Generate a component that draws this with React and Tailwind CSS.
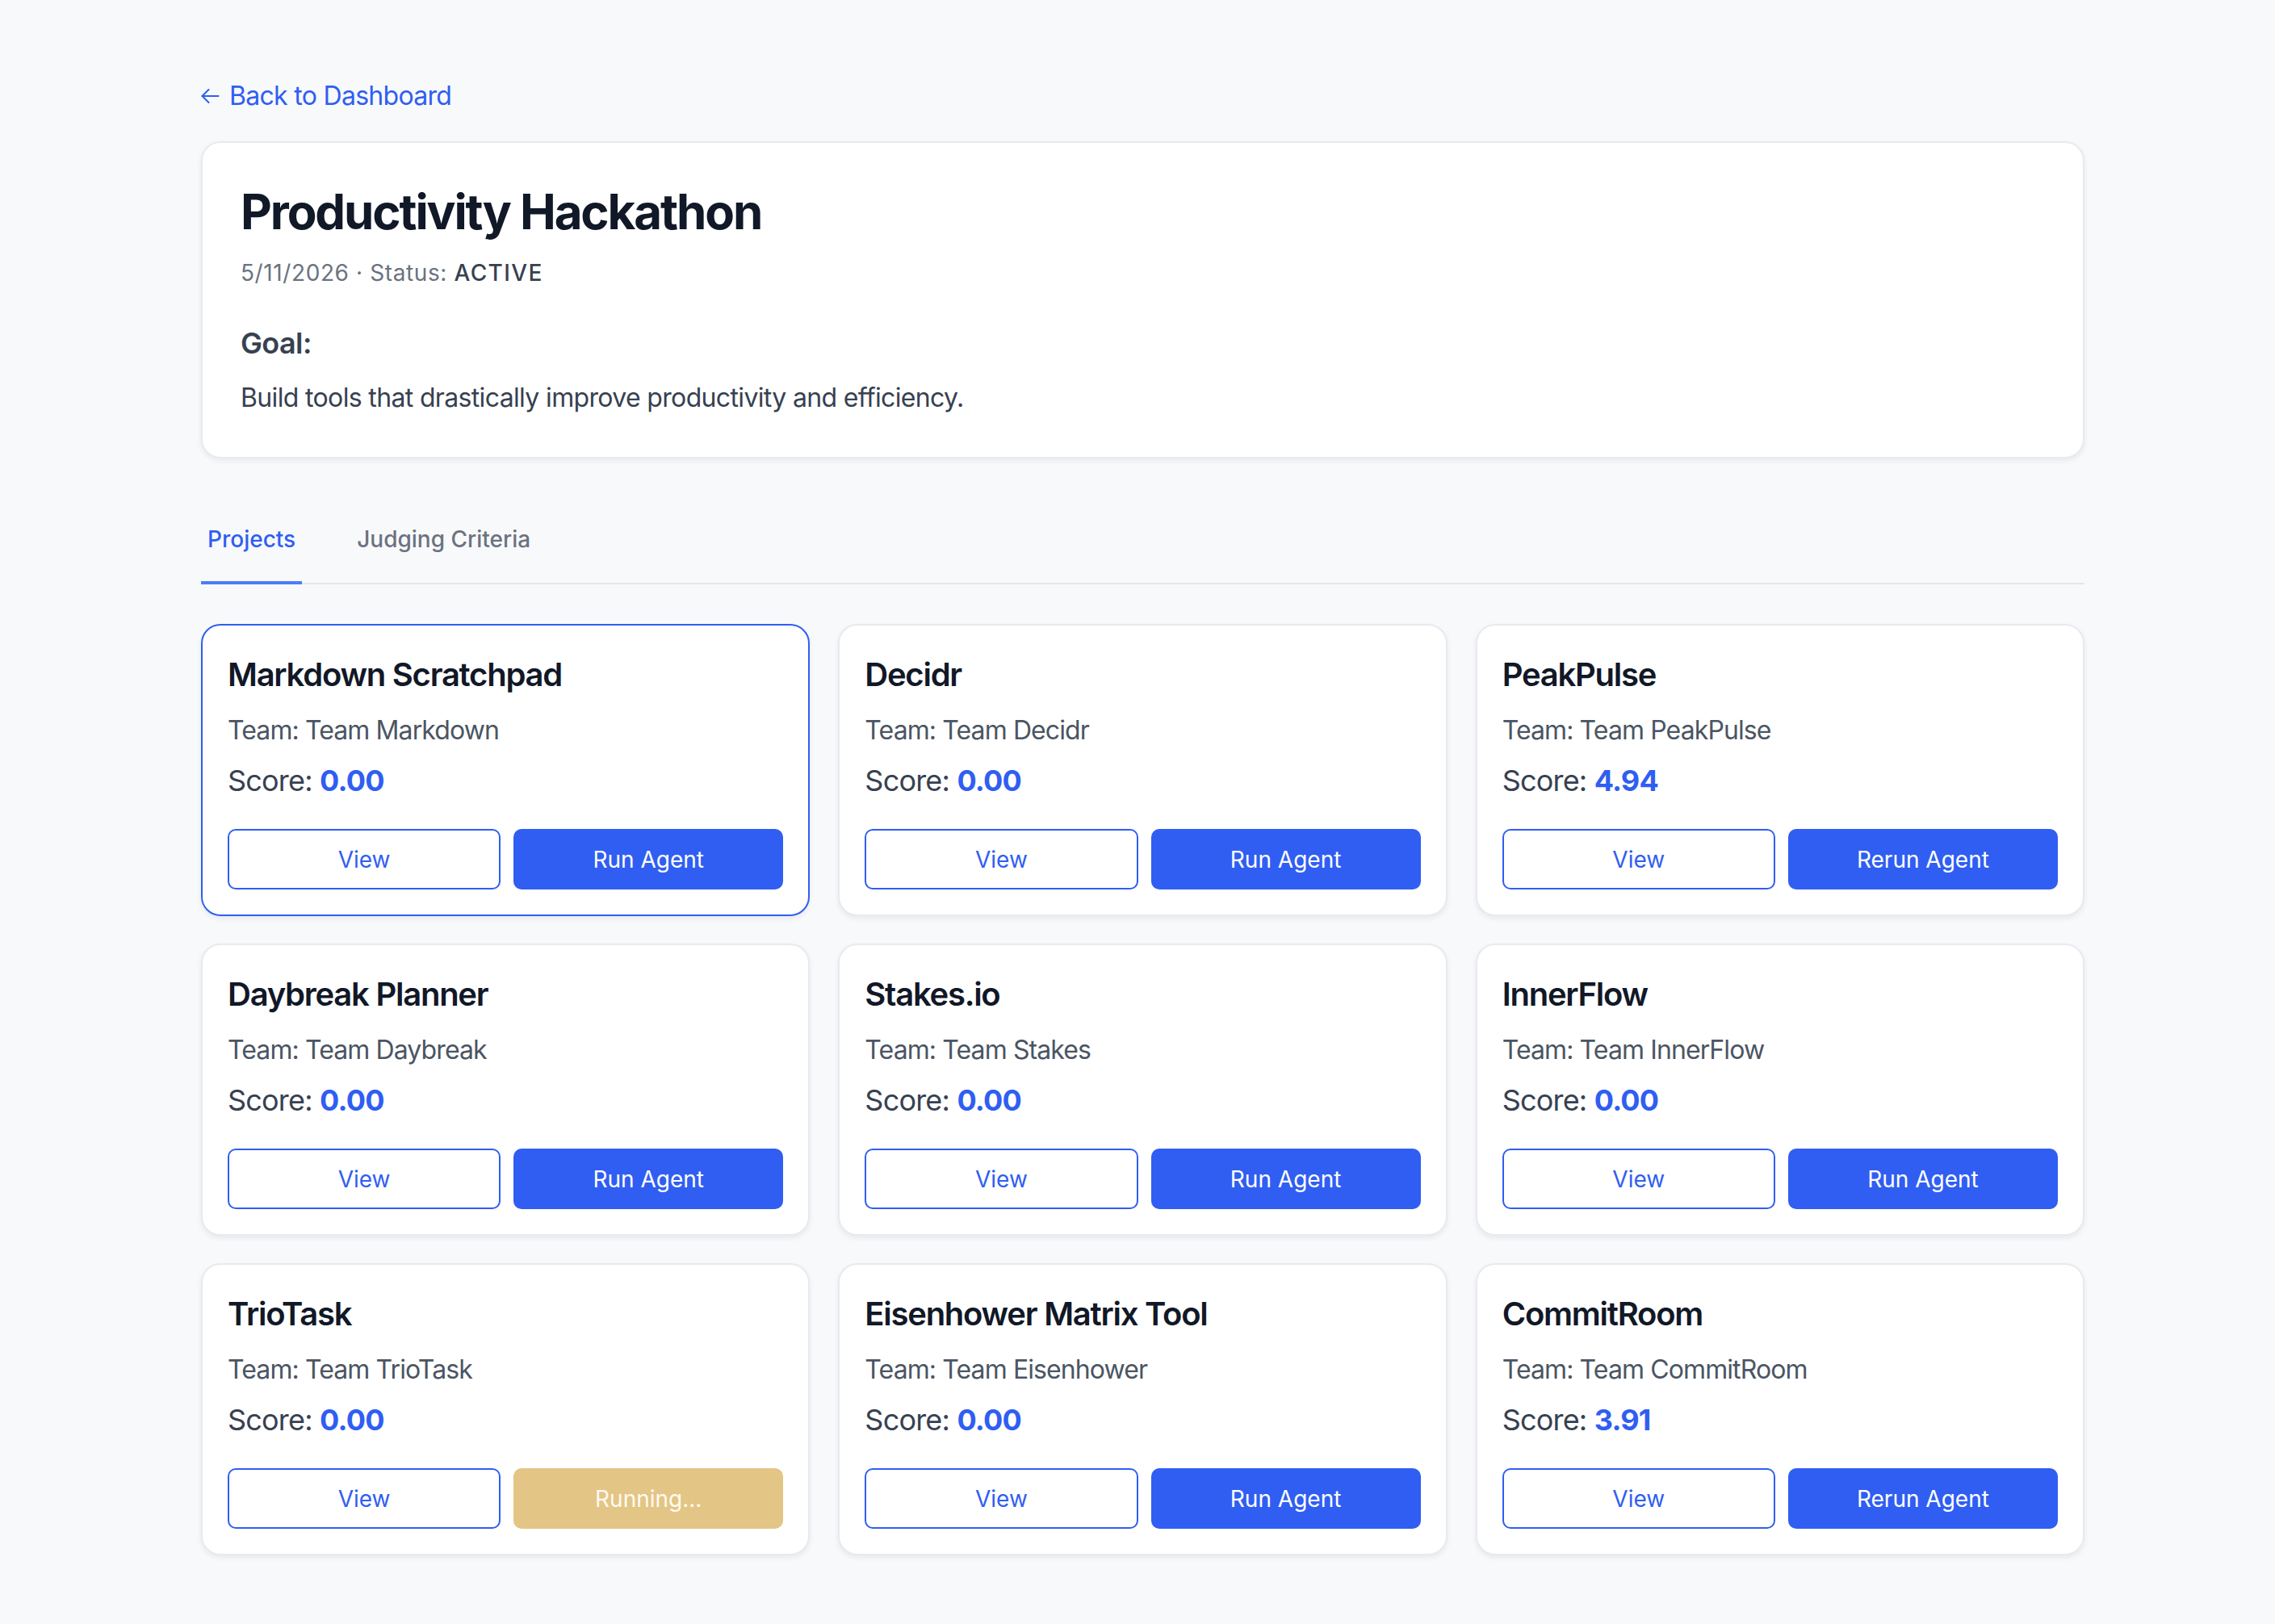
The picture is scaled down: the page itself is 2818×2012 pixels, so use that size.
import React from "react";

const projects = [
  { name: "Markdown Scratchpad", team: "Team Markdown", score: "0.00", action: "run", selected: true },
  { name: "Decidr", team: "Team Decidr", score: "0.00", action: "run" },
  { name: "PeakPulse", team: "Team PeakPulse", score: "4.94", action: "rerun" },
  { name: "Daybreak Planner", team: "Team Daybreak", score: "0.00", action: "run" },
  { name: "Stakes.io", team: "Team Stakes", score: "0.00", action: "run" },
  { name: "InnerFlow", team: "Team InnerFlow", score: "0.00", action: "run" },
  { name: "TrioTask", team: "Team TrioTask", score: "0.00", action: "running" },
  { name: "Eisenhower Matrix Tool", team: "Team Eisenhower", score: "0.00", action: "run" },
  { name: "CommitRoom", team: "Team CommitRoom", score: "3.91", action: "rerun" },
];

function ArrowLeft() {
  return (
    <svg width="23" height="20" viewBox="0 0 23 20" fill="none" stroke="currentColor" strokeWidth="2" strokeLinecap="round" strokeLinejoin="round">
      <path d="M21.5 10H1.5" />
      <path d="M9.5 2L1.5 10L9.5 18" />
    </svg>
  );
}

function ActionButton({ action }) {
  if (action === "running") {
    return (
      <button className="flex-1 h-[75px] rounded-[10px] bg-[#e3c585] text-[#fffaf0] text-[28px] leading-[40px]">
        Running...
      </button>
    );
  }
  return (
    <button className="flex-1 h-[75px] rounded-[10px] bg-[#305ef2] text-white text-[28px] leading-[40px]">
      {action === "rerun" ? "Rerun Agent" : "Run Agent"}
    </button>
  );
}

function ProjectCard({ p }) {
  return (
    <div
      className={
        p.selected
          ? "rounded-[24px] border-2 border-[#305ef2] bg-white px-[31px] pt-[33px] pb-[31px] shadow-[0_3px_6px_rgba(17,24,39,0.07)]"
          : "rounded-[24px] border-2 border-[#e8eaf0] bg-white px-[31px] pt-[33px] pb-[31px] shadow-[0_3px_6px_rgba(17,24,39,0.07)]"
      }
    >
      <h3 className="text-[40px] leading-[56px] font-semibold tracking-[-1.25px] text-[#111827]">{p.name}</h3>
      <p className="mt-[17px] text-[32px] leading-[48px] tracking-[-0.9px] text-[#4b5563]">Team: {p.team}</p>
      <p className="mt-[10px] text-[36px] leading-[56px] tracking-[-0.8px] text-[#374151]">
        Score: <span className="font-bold text-[#305ef2]">{p.score}</span>
      </p>
      <div className="mt-[32px] flex gap-[16px]">
        <button className="flex-1 h-[75px] rounded-[10px] border-2 border-[#305ef2] bg-white text-[#305ef2] text-[28px] leading-[40px]">
          View
        </button>
        <ActionButton action={p.action} />
      </div>
    </div>
  );
}

export default function App() {
  return (
    <div className="min-h-screen bg-[#f8f9fb] font-['Inter',_'Liberation_Sans',_sans-serif] pt-[95px] pb-[80px] pl-[249px] pr-[236px]">
      <a href="#" className="inline-flex items-center gap-[12px] text-[32px] leading-[48px] tracking-[-0.7px] text-[#305ef2]">
        <ArrowLeft />
        <span>Back to Dashboard</span>
      </a>

      <section className="mt-[32px] rounded-[24px] border-2 border-[#e8eaf0] bg-white px-[47px] pt-[49px] pb-[49px] shadow-[0_3px_6px_rgba(17,24,39,0.07)]">
        <h1 className="text-[60px] leading-[72px] font-bold tracking-[-2.1px] text-[#111827]">Productivity Hackathon</h1>
        <p className="mt-[20px] text-[28px] leading-[40px] tracking-[0.6px] text-[#6b7280]">
          5/11/2026 · Status: <span className="font-medium tracking-[1.4px] text-[#374151]">ACTIVE</span>
        </p>
        <h2 className="mt-[39px] text-[36px] leading-[56px] font-semibold tracking-[-0.6px] text-[#374151]">Goal:</h2>
        <p className="mt-[16px] text-[32px] leading-[48px] tracking-[-0.65px] text-[#374151]">
          Build tools that drastically improve productivity and efficiency.
        </p>
      </section>

      <div className="mt-[48px] flex border-b-2 border-[#e5e7eb]">
        <button className="-mb-[2px] border-b-4 border-[#4a7ef5] px-[8px] pt-[32px] pb-[32px] text-[28px] leading-[40px] font-medium text-[#305ef2]">
          Projects
        </button>
        <button className="-mb-[2px] ml-[60px] border-b-4 border-transparent px-[8px] pt-[32px] pb-[32px] text-[28px] leading-[40px] font-medium text-[#6b7280]">
          Judging Criteria
        </button>
      </div>

      <div className="mt-[49px] grid grid-cols-3 gap-x-[35px] gap-y-[34px]">
        {projects.map((p) => (
          <ProjectCard key={p.name} p={p} />
        ))}
      </div>
    </div>
  );
}
